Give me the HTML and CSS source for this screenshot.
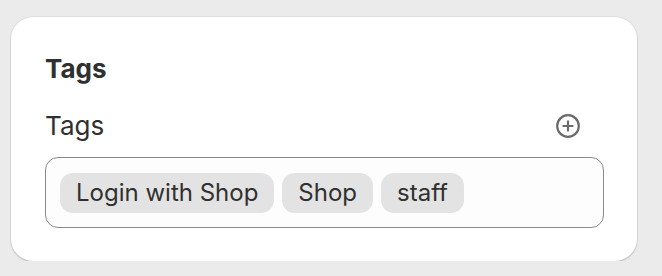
FILE: index.html
```html
<!DOCTYPE html>
<html>
<head>
<meta charset="utf-8">
<link rel="stylesheet" href="styles.css">
</head>
<body>
<div class="card">
  <h2 class="title">Tags</h2>
  <div class="label-row">
    <span class="label">Tags</span>
    <button class="add" aria-label="Add tag">
      <svg width="26" height="26" viewBox="0 0 26 26" fill="none" stroke="#6b6b6b" stroke-width="2.2" stroke-linecap="round">
        <circle cx="13" cy="13" r="10.8"/>
        <path d="M13 8.4v9.2M8.4 13h9.2"/>
      </svg>
    </button>
  </div>
  <div class="field">
    <span class="chip">Login with Shop</span>
    <span class="chip">Shop</span>
    <span class="chip">staff</span>
  </div>
</div>
</body>
</html>
```

FILE: styles.css
```css
* { box-sizing: border-box; }
html, body { margin: 0; }
body {
  background: #ebebeb;
  font-family: Inter, "Noto Sans", sans-serif;
  color: #303030;
  padding: 17px 26px 0 11px;
}
.card {
  width: 626px;
  height: 244px;
  background: #fff;
  border-radius: 22px;
  box-shadow: 0 1px 2px rgba(0,0,0,0.18), 0 0 0 1px rgba(0,0,0,0.04);
  padding: 34px 33px 0 34px;
}
.title {
  margin: 0;
  font-size: 26px;
  font-weight: 650;
  line-height: 36px;
}
.label-row {
  display: flex;
  justify-content: space-between;
  align-items: center;
  margin-top: 21px;
  height: 36px;
}
.label {
  font-size: 26px;
  line-height: 36px;
}
.add {
  border: 0;
  background: none;
  padding: 0;
  margin-right: 23px;
  width: 26px;
  height: 26px;
  display: flex;
}
.field {
  margin-top: 13px;
  height: 71px;
  border: 1px solid #8a8a8a;
  border-radius: 13px;
  background: #fdfdfd;
  display: flex;
  align-items: center;
  gap: 8px;
  padding: 0 14px;
}
.chip {
  background: #e3e3e3;
  border-radius: 13px;
  height: 40px;
  display: flex;
  align-items: center;
  padding: 0 16px;
  font-size: 24px;
}
```
